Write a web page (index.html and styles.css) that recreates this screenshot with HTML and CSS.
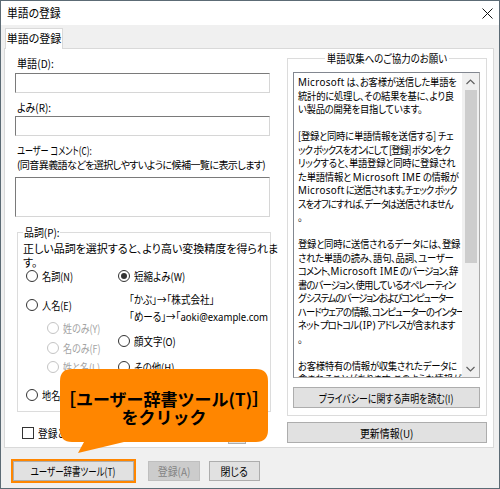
FILE: index.html
```html
<!DOCTYPE html>
<html lang="ja">
<head>
<meta charset="utf-8">
<title>単語の登録</title>
<link rel="stylesheet" href="styles.css">
</head>
<body>
<div class="window">
  <div class="titlebar">
    <span class="title sq s90">単語の登録</span>
    <svg class="close" width="11" height="11" viewBox="0 0 11 11"><path d="M0.5 0.5 L10.5 10.5 M10.5 0.5 L0.5 10.5" stroke="#111" stroke-width="1" fill="none"/></svg>
  </div>
  <div class="client">
    <div class="tabs"><div class="tab">単語の登録</div></div>
    <div class="panel">
      <div class="left">
        <div class="label"><span class="sq s92">単語(D):</span></div>
        <div class="input"></div>
        <div class="label gap7"><span class="sq s90">よみ(R):</span></div>
        <div class="input"></div>
        <div class="label gap7"><span class="sq s74">ユーザー コメント(C):</span></div>
        <div class="note"><span class="sq s96">(同音異義語などを選択しやすいように候補一覧に表示します)</span></div>
        <div class="textarea"></div>
        <fieldset class="pos">
          <legend><span class="sq s90 lg1">品詞(P):</span></legend>
          <p class="desc">正しい品詞を選択すると、より高い変換精度を得られま<br>す。</p>
          <div class="opts">
            <div class="col">
              <div class="opt"><span class="radio"></span><span class="sq s83">名詞(N)</span></div>
              <div class="opt c1-2"><span class="radio"></span><span class="sq s83">人名(E)</span></div>
              <div class="opt dis sub c1-3"><span class="radio"></span><span class="sq s82">姓のみ(Y)</span></div>
              <div class="opt dis sub c1-4"><span class="radio"></span><span class="sq s82">名のみ(F)</span></div>
              <div class="opt dis sub c1-5"><span class="radio"></span><span class="sq s82">姓と名(L)</span></div>
              <div class="opt c1-6"><span class="radio"></span><span class="sq s83">地名(G)</span></div>
            </div>
            <div class="col">
              <div class="opt"><span class="radio on"></span><span class="sq s86">短縮よみ(W)</span></div>
              <div class="ex c2-2"><span class="sq s87">「かぶ」→「株式会社」</span></div>
              <div class="ex c2-3"><span class="sq s87">「めーる」→「<span class="lat">aoki@example.com</span></span></div>
              <div class="opt c2-4"><span class="radio"></span><span class="sq s86">顔文字(O)</span></div>
              <div class="opt c2-5"><span class="radio"></span><span class="sq s86">その他(H)</span></div>
            </div>
          </div>
        </fieldset>
        <div class="check-row">
          <span class="checkbox"></span>
          <span class="check-label"><span class="sq s88">登録と同時に単語情報を送信する(S)</span></span>
          <span class="mini"></span>
        </div>
      </div>
      <div class="right">
        <fieldset class="info">
          <legend><span class="sqc s86 lg2">単語収集へのご協力のお願い</span></legend>
          <div class="memo">
            <div class="memo-text">
              <div class="memo-lines">
                <div><span class="lat">Microsoft</span> は、お客様が送信した単語を</div>
                <div>統計的に処理し、その結果を基に、より良</div>
                <div>い製品の開発を目指しています。</div>
                <div class="blank"></div>
                <div>[登録と同時に単語情報を送信する] チェ</div>
                <div class="k">ック ボックスをオンにして [登録] ボタンをク</div>
                <div>リックすると、単語登録と同時に登録され</div>
                <div>た単語情報と <span class="lat">Microsoft IME</span> の情報が</div>
                <div class="k"><span class="lat">Microsoft</span> に送信されます。チェック ボック</div>
                <div class="k">スをオフにすれば、データは送信されません</div>
                <div>。</div>
                <div class="blank"></div>
                <div>登録と同時に送信されるデータには、登録</div>
                <div>された単語の読み、語句、品詞、ユーザー</div>
                <div class="k">コメント、<span class="lat">Microsoft IME</span> のバージョン、辞</div>
                <div class="k">書のバージョン、使用しているオペレーティン</div>
                <div class="k kk">グ システムのバージョンおよびコンピューター</div>
                <div class="k">ハードウェアの情報、コンピューターのインター</div>
                <div class="k">ネット プロトコル <span class="lat">(IP)</span> アドレスが含まれます</div>
                <div>。</div>
                <div class="blank"></div>
                <div>お客様特有の情報が収集されたデータに</div>
                <div>含まれることがあります。このような情報が</div>
              </div>
            </div>
            <div class="scrollbar">
              <div class="sb-btn"><svg width="9" height="6" viewBox="0 0 9 6"><path d="M0.5 5 L4.5 1 L8.5 5" stroke="#606060" stroke-width="1.2" fill="none"/></svg></div>
              <div class="thumb"></div>
              <div class="sb-space"></div>
              <div class="sb-btn"><svg width="9" height="6" viewBox="0 0 9 6"><path d="M0.5 1 L4.5 5 L8.5 1" stroke="#606060" stroke-width="1.2" fill="none"/></svg></div>
            </div>
          </div>
          <button class="btn privacy"><span class="sqc s81">プライバシーに関する声明を読む(I)</span></button>
        </fieldset>
        <button class="btn update"><span class="sqc s90">更新情報(U)</span></button>
      </div>
    </div>
    <div class="footer">
      <button class="btn tool"><span class="sqc s77">ユーザー辞書ツール(T)</span></button>
      <button class="btn disabled reg"><span class="sqc s90">登録(A)</span></button>
      <button class="btn closebtn"><span class="sqc s90">閉じる</span></button>
    </div>
  </div>
  <div class="callout">
    <svg class="callout-shape" width="210" height="86" viewBox="0 0 210 86">
      <path d="M12 0 H196 Q208 0 208 12 V61 Q208 73 196 73 H64 L18 84 L24 73 H12 Q0 73 0 61 V12 Q0 0 12 0 Z" fill="#ff8600"/>
    </svg>
    <div class="callout-text">
      <div>［ユーザー辞書ツール(T)］</div>
      <div>をクリック</div>
    </div>
  </div>
</div>
</body>
</html>
```

FILE: styles.css
```css
* { box-sizing: border-box; }
html, body { margin: 0; padding: 0; }
body {
  width: 500px;
  height: 489px;
  overflow: hidden;
  font-family: "Noto Sans CJK JP", "Noto Sans", sans-serif;
  font-size: 11px;
  color: #000;
  font-feature-settings: "palt";
}

/* horizontal condensing to mimic the narrow UI face */
.sq { display: inline-block; transform-origin: 0 50%; white-space: nowrap; }
.sqc { display: inline-block; transform-origin: 50% 50%; white-space: nowrap; }
.s74 { transform: scaleX(0.74); }
.s77 { transform: scaleX(0.77); }
.s81 { transform: scaleX(0.81); }
.s82 { transform: scaleX(0.82); }
.s83 { transform: scaleX(0.83); }
.s86 { transform: scaleX(0.86); }
.s87 { transform: scaleX(0.87); }
.s88 { transform: scaleX(0.88); }
.s90 { transform: scaleX(0.90); }
.s92 { transform: scaleX(0.92); }
.s96 { transform: scaleX(0.96); }

.window {
  position: relative;
  width: 500px;
  height: 489px;
  border: 1px solid #5c6b75;
  background: #f0f0f0;
}
.titlebar {
  height: 24px;
  background: #fff;
  display: flex;
  align-items: center;
  justify-content: space-between;
  padding: 0 6px;
}
.title { font-size: 12px; line-height: 16px; }
.close { display: block; }
.client { padding: 3px 5px 0 3px; }
.tabs { display: flex; padding-left: 1px; }
.tab {
  height: 21px;
  width: 58px;
  background: #fff;
  border: 1px solid #d9d9d9;
  border-bottom: 0;
  margin-bottom: -1px;
  position: relative;
  z-index: 1;
  text-align: center;
  line-height: 19px;
}
.panel {
  height: 400px;
  background: #fff;
  border: 1px solid #d9d9d9;
  display: flex;
  align-items: flex-start;
  padding: 0 6px 0 10px;
  gap: 16px;
}
.left { width: 256px; padding-top: 7px; }
.right { width: 200px; }
.label { line-height: 14px; height: 14px; padding-left: 2px; white-space: nowrap; }
.gap7 { margin-top: 7px; }
.input {
  width: 255px;
  height: 20px;
  margin-top: 3px;
  border: 1px solid #7a7a7a;
  border-right-color: #d6d6d6;
  border-bottom-color: #d6d6d6;
}
.gap7 + .input { margin-top: 2px; }
.note {
  line-height: 14px;
  height: 14px;
  margin-top: 1px;
  padding-left: 2px;
  white-space: nowrap;
  font-size: 10.5px;
  letter-spacing: -0.65px;
}
.textarea {
  width: 255px;
  height: 40px;
  margin-top: 5px;
  border: 1px solid #7a7a7a;
  border-right-color: #d6d6d6;
  border-bottom-color: #d6d6d6;
}
.pos {
  margin: 8px 0 0 2px;
  width: 254px;
  height: 187px;
  border: 1px solid #dcdcdc;
  padding: 0 5px;
  min-width: 0;
}
legend { padding: 0 1px; line-height: 14px; font-size: 11px; }
.lg1 { margin-right: -4px; }
.lg2 { margin: 0 -9px; }
.desc { margin: 2px 0 0; line-height: 14px; white-space: nowrap; }
.opts {
  display: grid;
  grid-template-columns: 95px 1fr;
}
.col:first-child { padding-left: 3px; }
.opt {
  display: flex;
  align-items: center;
  gap: 4px;
  height: 14px;
  line-height: 14px;
  white-space: nowrap;
}
.radio {
  width: 12px;
  height: 12px;
  flex: none;
  border: 1px solid #333;
  border-radius: 50%;
  background: #fff;
  display: flex;
  align-items: center;
  justify-content: center;
}
.radio.on::after {
  content: "";
  width: 6px;
  height: 6px;
  border-radius: 50%;
  background: #333;
}
.dis { color: #a3a3a3; }
.dis .radio { border-color: #c4c4c4; }
.sub { margin-left: 21px; }
.c1-2 { margin-top: 15px; }
.c1-3 { margin-top: 9px; }
.c1-4 { margin-top: 6px; }
.c1-5 { margin-top: 5px; }
.c1-6 { margin-top: 14px; }
.ex { line-height: 14px; height: 14px; margin-left: 11px; white-space: nowrap; }
.c2-2 { margin-top: 9px; }
.c2-3 { margin-top: 3px; }
.c2-4 { margin-top: 11px; }
.c2-5 { margin-top: 12px; }
.lat { font-family: "Noto Sans", "Open Sans", sans-serif; letter-spacing: 0; }
.check-row {
  display: flex;
  align-items: flex-start;
  height: 20px;
  margin-top: 12px;
}
.checkbox {
  width: 12px;
  height: 12px;
  margin: 3px 0 0 7px;
  border: 1px solid #333;
  background: #fff;
  flex: none;
}
.check-label { margin: 2px 0 0 4px; line-height: 14px; white-space: nowrap; }
.mini {
  width: 18px;
  height: 20px;
  margin-left: auto;
  margin-right: 25px;
  background: #e1e1e1;
  border: 1px solid #adadad;
  flex: none;
}
.info {
  margin: 2px 0 0;
  width: 200px;
  border: 1px solid #dcdcdc;
  padding: 0 6px 7px 5px;
  min-width: 0;
}
.info legend { margin: 0 auto; }
.memo {
  display: flex;
  height: 306px;
  margin-top: 7px;
  border: 1px solid #828790;
  border-right-color: #a9a9a9;
  border-bottom-color: #a9a9a9;
  background: #fff;
}
.memo-text {
  flex: 1;
  min-width: 0;
  overflow: hidden;
  padding: 2px 0 0 4px;
}
.memo-lines {
  width: 186px;
  transform: scaleX(0.89);
  transform-origin: 0 0;
  line-height: 13.5px;
  white-space: nowrap;
  font-size: 10.5px;
  letter-spacing: -0.3px;
}
.memo-lines .k { letter-spacing: -1px; }
.memo-lines .kk { letter-spacing: -1.4px; }
.memo-lines .lat { font-size: 11px; letter-spacing: 0.4px; }
.blank { height: 13.5px; }
.scrollbar {
  width: 17px;
  flex: none;
  background: #f0f0f0;
  display: flex;
  flex-direction: column;
}
.sb-btn {
  height: 17px;
  display: flex;
  align-items: center;
  justify-content: center;
}
.thumb {
  height: 173px;
  width: 12px;
  margin-left: 3px;
  background: #cdcdcd;
}
.sb-space { flex: 1; }
.btn {
  font-family: inherit;
  font-size: 11px;
  font-feature-settings: "palt";
  color: #000;
  background: #e1e1e1;
  border: 1px solid #adadad;
  padding: 0;
  margin: 0;
  display: block;
  line-height: 14px;
  text-align: center;
  white-space: nowrap;
}
.privacy { width: 187px; height: 21px; margin-top: 9px; }
.update { width: 200px; height: 21px; margin-top: 6px; }
.footer { display: flex; padding: 13px 0 0 9px; }
.tool { width: 121px; height: 20px; outline: 2px solid #ff8600; outline-offset: 0; }
.reg { width: 52px; height: 20px; margin-left: 14px; }
.closebtn { width: 51px; height: 20px; margin-left: 9px; }
.disabled { background: #cccccc; border-color: #bfbfbf; color: #838383; }
.callout {
  position: absolute;
  left: 59px;
  top: 368px;
  width: 210px;
  height: 86px;
  z-index: 5;
}
.callout-shape { position: absolute; left: 0; top: 0; display: block; }
.callout-text {
  position: absolute;
  left: 0;
  top: 0;
  width: 208px;
  height: 73px;
  display: flex;
  flex-direction: column;
  align-items: center;
  justify-content: center;
  padding-top: 5px;
  font-size: 17px;
  font-weight: bold;
  line-height: 18px;
  font-feature-settings: normal;
  white-space: nowrap;
}
```
